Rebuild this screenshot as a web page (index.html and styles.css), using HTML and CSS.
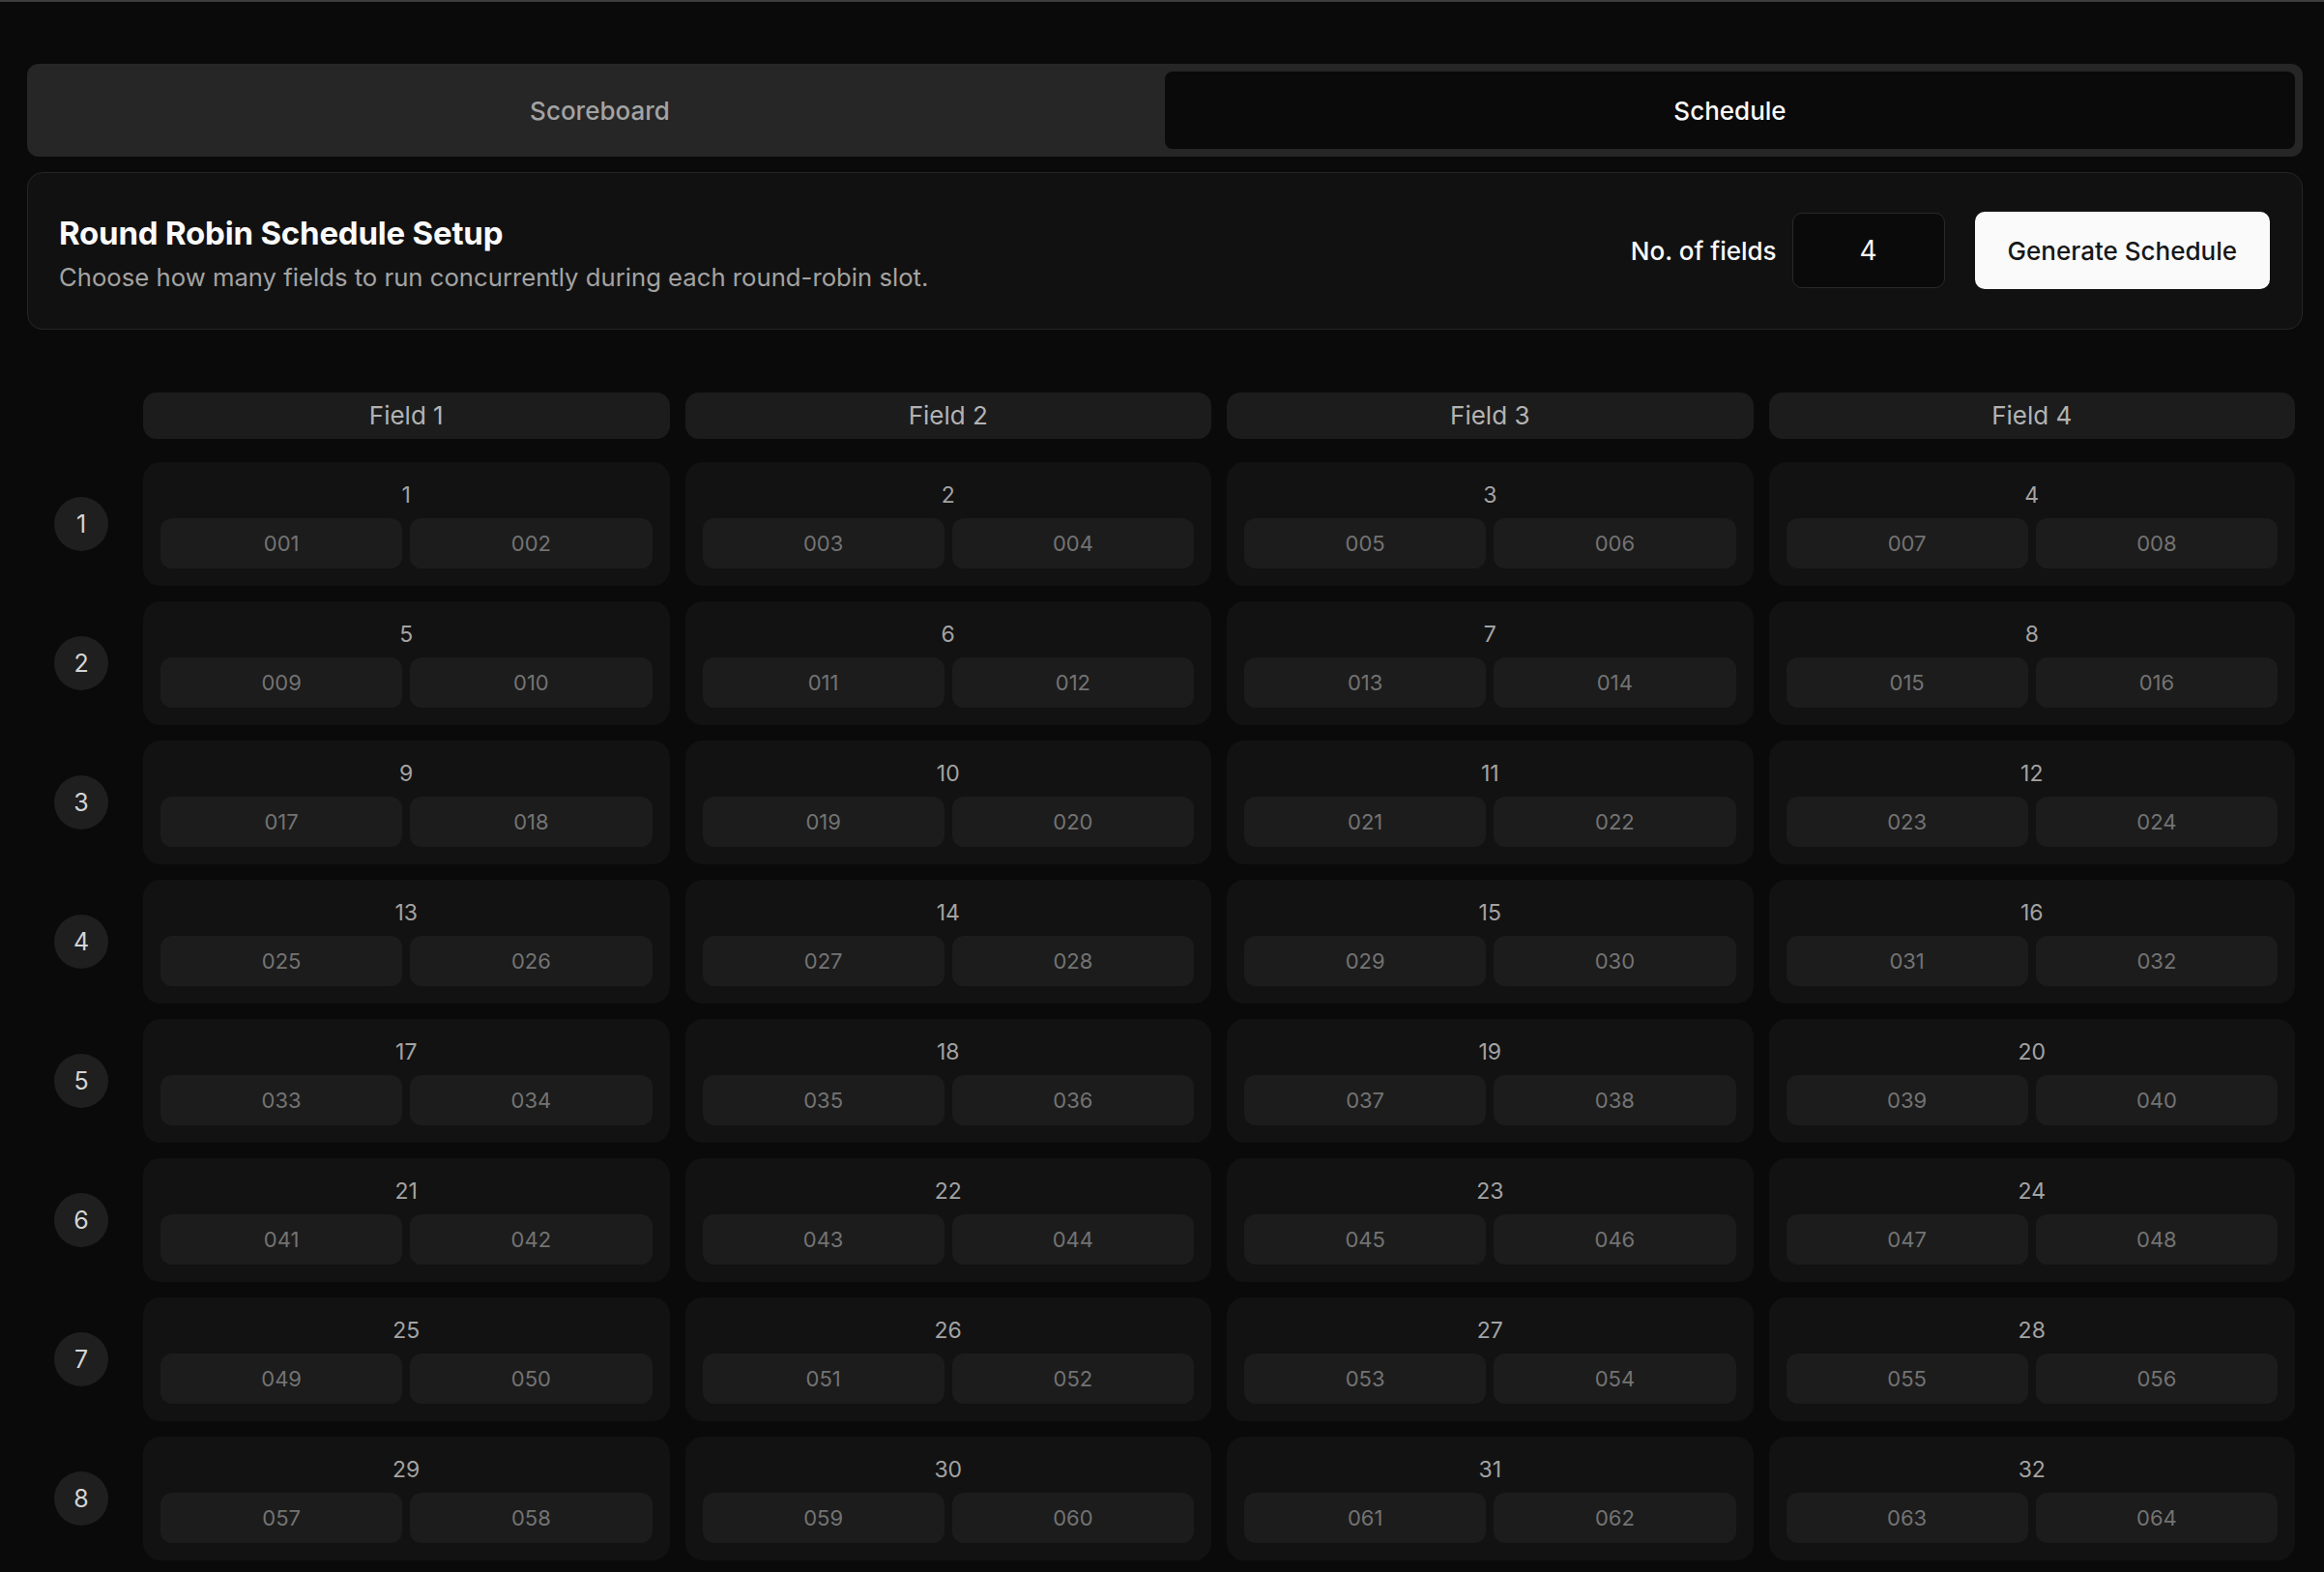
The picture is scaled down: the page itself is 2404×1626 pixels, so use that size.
FILE: index.html
```html
<!DOCTYPE html>
<html lang="en">
<head>
  <meta charset="utf-8">
  <title>Round Robin Schedule</title>
  <link rel="stylesheet" href="styles.css">
</head>
<body>

<div class="page">

  <div class="tabs">
    <button class="tab">Scoreboard</button>
    <button class="tab active">Schedule</button>
  </div>

  <section class="setup">
    <div class="setup-text">
      <h2>Round Robin Schedule Setup</h2>
      <p>Choose how many fields to run concurrently during each round-robin slot.</p>
    </div>
    <div class="setup-controls">
      <label for="fields">No. of fields</label>
      <input id="fields" class="fields-input" type="text" value="4">
      <button class="generate">Generate Schedule</button>
    </div>
  </section>

  <div class="schedule">
    <div></div>
    <div class="field-head">Field 1</div>
    <div class="field-head">Field 2</div>
    <div class="field-head">Field 3</div>
    <div class="field-head">Field 4</div>

    <!-- round 1 -->
    <div class="round"><span>1</span></div>
    <div class="match"><div class="match-no">1</div><div class="teams"><div class="team">001</div><div class="team">002</div></div></div>
    <div class="match"><div class="match-no">2</div><div class="teams"><div class="team">003</div><div class="team">004</div></div></div>
    <div class="match"><div class="match-no">3</div><div class="teams"><div class="team">005</div><div class="team">006</div></div></div>
    <div class="match"><div class="match-no">4</div><div class="teams"><div class="team">007</div><div class="team">008</div></div></div>

    <!-- round 2 -->
    <div class="round"><span>2</span></div>
    <div class="match"><div class="match-no">5</div><div class="teams"><div class="team">009</div><div class="team">010</div></div></div>
    <div class="match"><div class="match-no">6</div><div class="teams"><div class="team">011</div><div class="team">012</div></div></div>
    <div class="match"><div class="match-no">7</div><div class="teams"><div class="team">013</div><div class="team">014</div></div></div>
    <div class="match"><div class="match-no">8</div><div class="teams"><div class="team">015</div><div class="team">016</div></div></div>

    <!-- round 3 -->
    <div class="round"><span>3</span></div>
    <div class="match"><div class="match-no">9</div><div class="teams"><div class="team">017</div><div class="team">018</div></div></div>
    <div class="match"><div class="match-no">10</div><div class="teams"><div class="team">019</div><div class="team">020</div></div></div>
    <div class="match"><div class="match-no">11</div><div class="teams"><div class="team">021</div><div class="team">022</div></div></div>
    <div class="match"><div class="match-no">12</div><div class="teams"><div class="team">023</div><div class="team">024</div></div></div>

    <!-- round 4 -->
    <div class="round"><span>4</span></div>
    <div class="match"><div class="match-no">13</div><div class="teams"><div class="team">025</div><div class="team">026</div></div></div>
    <div class="match"><div class="match-no">14</div><div class="teams"><div class="team">027</div><div class="team">028</div></div></div>
    <div class="match"><div class="match-no">15</div><div class="teams"><div class="team">029</div><div class="team">030</div></div></div>
    <div class="match"><div class="match-no">16</div><div class="teams"><div class="team">031</div><div class="team">032</div></div></div>

    <!-- round 5 -->
    <div class="round"><span>5</span></div>
    <div class="match"><div class="match-no">17</div><div class="teams"><div class="team">033</div><div class="team">034</div></div></div>
    <div class="match"><div class="match-no">18</div><div class="teams"><div class="team">035</div><div class="team">036</div></div></div>
    <div class="match"><div class="match-no">19</div><div class="teams"><div class="team">037</div><div class="team">038</div></div></div>
    <div class="match"><div class="match-no">20</div><div class="teams"><div class="team">039</div><div class="team">040</div></div></div>

    <!-- round 6 -->
    <div class="round"><span>6</span></div>
    <div class="match"><div class="match-no">21</div><div class="teams"><div class="team">041</div><div class="team">042</div></div></div>
    <div class="match"><div class="match-no">22</div><div class="teams"><div class="team">043</div><div class="team">044</div></div></div>
    <div class="match"><div class="match-no">23</div><div class="teams"><div class="team">045</div><div class="team">046</div></div></div>
    <div class="match"><div class="match-no">24</div><div class="teams"><div class="team">047</div><div class="team">048</div></div></div>

    <!-- round 7 -->
    <div class="round"><span>7</span></div>
    <div class="match"><div class="match-no">25</div><div class="teams"><div class="team">049</div><div class="team">050</div></div></div>
    <div class="match"><div class="match-no">26</div><div class="teams"><div class="team">051</div><div class="team">052</div></div></div>
    <div class="match"><div class="match-no">27</div><div class="teams"><div class="team">053</div><div class="team">054</div></div></div>
    <div class="match"><div class="match-no">28</div><div class="teams"><div class="team">055</div><div class="team">056</div></div></div>

    <!-- round 8 -->
    <div class="round"><span>8</span></div>
    <div class="match"><div class="match-no">29</div><div class="teams"><div class="team">057</div><div class="team">058</div></div></div>
    <div class="match"><div class="match-no">30</div><div class="teams"><div class="team">059</div><div class="team">060</div></div></div>
    <div class="match"><div class="match-no">31</div><div class="teams"><div class="team">061</div><div class="team">062</div></div></div>
    <div class="match"><div class="match-no">32</div><div class="teams"><div class="team">063</div><div class="team">064</div></div></div>
  </div>

</div>

</body>
</html>
```

FILE: styles.css
```css
* {
  box-sizing: border-box;
  }

body {
  margin: 0;
  background-color: #0a0a0a;
  border-top: 2px solid #3d3d3d;
  font-family: Inter, "Noto Sans", sans-serif;
  color: #fafafa;
  }

.page {
  padding: 64px 22px 40px 28px;
  }

/* ---------- tabs ---------- */

.tabs {
  display: grid;
  grid-template-columns: 1fr 1fr;
  padding: 8px;
  background-color: #262626;
  border-radius: 12px;
  }

.tab {
  height: 80px;
  border: none;
  border-radius: 8px;
  background: transparent;
  font-family: inherit;
  font-size: 26px;
  font-weight: 500;
  color: #a3a3a3;
  }

.tab.active {
  background-color: #0a0a0a;
  color: #fafafa;
  }

/* ---------- setup card ---------- */

.setup {
  display: flex;
  align-items: center;
  justify-content: space-between;
  margin-top: 16px;
  padding: 34px 33px 35px 32px;
  background-color: #111;
  border: 1px solid #262626;
  border-radius: 16px;
  }

.setup-text {
  padding-top: 8px;
  }

.setup h2 {
  margin: 0 0 8px 0;
  font-size: 33px;
  line-height: 40px;
  font-weight: 700;
  letter-spacing: -0.2px;
  }

.setup p {
  margin: 0;
  font-size: 25.7px;
  line-height: 36px;
  color: #a3a3a3;
  }

.setup-controls {
  display: flex;
  align-items: center;
  }

.setup-controls label {
  font-size: 26px;
  font-weight: 500;
  margin-right: 16px;
  }

.fields-input {
  width: 158px;
  height: 78px;
  background-color: #0a0a0a;
  border: 1.5px solid #2a2a2a;
  border-radius: 10px;
  text-align: center;
  font-family: inherit;
  font-size: 28px;
  color: #fafafa;
  }

.generate {
  height: 80px;
  margin-left: 31px;
  padding: 0 34px;
  border: none;
  border-radius: 10px;
  background-color: #fafafa;
  color: #171717;
  font-family: inherit;
  font-size: 26px;
  font-weight: 500;
  }

/* ---------- schedule grid ---------- */

.schedule {
  display: grid;
  grid-template-columns: 96px repeat(4, 1fr);
  column-gap: 16px;
  row-gap: 16px;
  margin-top: 65px;
  padding: 0 8px;
  }

.field-head {
  height: 48px;
  margin-bottom: 8px;
  background-color: #1c1c1c;
  border-radius: 14px;
  text-align: center;
  line-height: 48px;
  font-size: 26px;
  color: #b3b3b3;
  }

.round {
  display: flex;
  align-items: center;
  justify-content: center;
  }

.round span {
  width: 56px;
  height: 56px;
  border-radius: 50%;
  background-color: #1f1f1f;
  display: flex;
  align-items: center;
  justify-content: center;
  font-size: 25px;
  color: #d4d4d4;
  }

.match {
  height: 128px;
  padding: 16px 18px 18px 18px;
  background-color: #121212;
  border-radius: 18px;
  }

.match-no {
  height: 36px;
  line-height: 36px;
  margin-bottom: 6px;
  text-align: center;
  font-size: 23px;
  color: #a3a3a3;
  }

.teams {
  display: grid;
  grid-template-columns: 1fr 1fr;
  gap: 8px;
  }

.team {
  height: 52px;
  line-height: 52px;
  background-color: #1c1c1c;
  border-radius: 12px;
  text-align: center;
  font-size: 22px;
  color: #737373;
  }
```
